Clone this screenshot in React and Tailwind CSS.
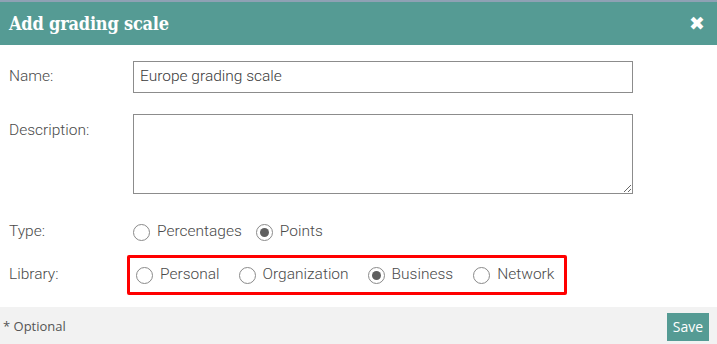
import React from 'react';

const Radio = ({ label, checked, className = '' }) => (
  <label className={`flex items-center ${className}`}>
    <span className="w-[17px] h-[17px] rounded-full border border-[#8a8a8a] bg-white flex items-center justify-center shrink-0">
      {checked && <span className="w-[9px] h-[9px] rounded-full bg-[#5f5f5f]"></span>}
    </span>
    <span className="ml-[7px]">{label}</span>
  </label>
);

const App = () => {
  return (
    <div className="w-[717px] h-[344px] bg-white flex flex-col text-[15.5px] font-light text-[#4a4a4a] font-['Roboto',sans-serif] overflow-hidden">
      <div className="h-[2px] bg-[#8fa1b4]"></div>
      <div className="h-[43px] bg-[#559b94] flex items-center justify-between pl-[9px] pr-[12px]">
        <h1 className="text-white font-bold text-[18px] font-['DejaVu_Serif',serif] [font-stretch:condensed] tracking-[-0.2px]">Add grading scale</h1>
        <span className="text-white text-[19px] font-['DejaVu_Sans',sans-serif] leading-none">✖</span>
      </div>

      <div className="flex-1 pt-[16px] pl-[9px]">
        <div className="flex items-center h-[32px]">
          <span className="w-[124px]">Name:</span>
          <div className="w-[500px] h-[32px] border border-[#8c8c8c] flex items-center px-[6px] text-[#3a3a3a]">
            Europe grading scale
          </div>
        </div>

        <div className="flex mt-[21px]">
          <span className="w-[124px] leading-[32px]">Description:</span>
          <textarea className="w-[500px] h-[80px] border border-[#8c8c8c] outline-none resize-y"></textarea>
        </div>

        <div className="flex items-center mt-[27px] h-[22px]">
          <span className="w-[124px]">Type:</span>
          <Radio label="Percentages" />
          <Radio label="Points" checked className="ml-[14px]" />
        </div>

        <div className="flex items-center mt-[12px]">
          <span className="w-[118px]">Library:</span>
          <div className="h-[40px] border-[3px] border-[#ff0000] rounded-[2px] flex items-center pl-[6px] pr-[10px]">
            <Radio label="Personal" />
            <Radio label="Organization" className="ml-[19px]" />
            <Radio label="Business" checked className="ml-[19px]" />
            <Radio label="Network" className="ml-[20px]" />
          </div>
        </div>
      </div>

      <div className="h-[37px] bg-[#f2f2f2] flex items-center justify-between pl-[3px] pr-[8px] pt-[2px]">
        <span className="text-[13px] text-[#555] font-normal font-['Open_Sans',sans-serif]">* Optional</span>
        <button className="w-[42px] h-[28px] bg-[#559b94] text-white text-[14px] font-normal font-['Open_Sans',sans-serif]">Save</button>
      </div>
    </div>
  );
};

export default App;
